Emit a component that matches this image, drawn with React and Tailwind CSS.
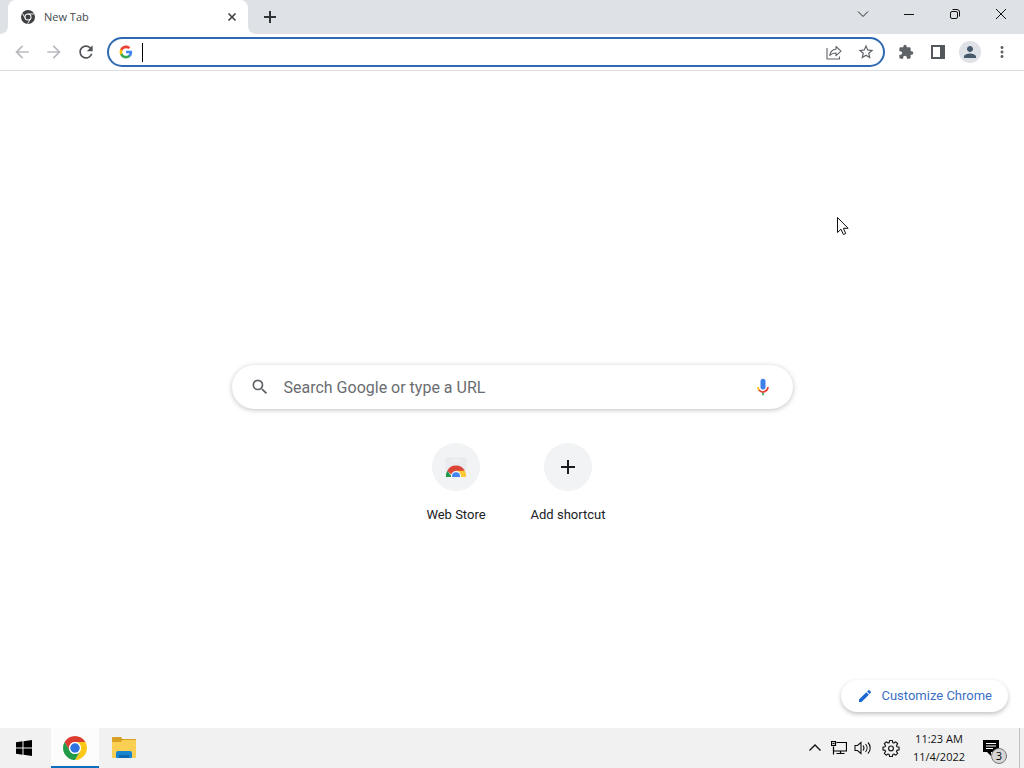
import React from "react";
import {
  MdArrowBack,
  MdArrowForward,
  MdRefresh,
  MdStarBorder,
  MdExtension,
  MdPerson,
  MdMoreVert,
  MdSearch,
  MdEdit,
} from "react-icons/md";

const RED = "M4.95 13A22 22 0 0 1 43.05 13L24 13A11 11 0 0 0 14.47 29.5Z";
const YELLOW = "M43.05 13A22 22 0 0 1 24 46L33.53 29.5A11 11 0 0 0 24 13Z";
const GREEN = "M24 46A22 22 0 0 1 4.95 13L14.47 29.5A11 11 0 0 0 33.53 29.5Z";

function ChromeLogo() {
  return (
    <svg viewBox="2 2 44 44" className="size-6" aria-hidden="true">
      <path d={RED} fill="#dc3b30" />
      <path d={YELLOW} fill="#fbc818" />
      <path d={GREEN} fill="#229a48" />
      <circle cx="24" cy="24" r="11" fill="#fff" />
      <circle cx="24" cy="24" r="8.7" fill="#2f74e0" />
    </svg>
  );
}

function ChromeMono() {
  return (
    <svg viewBox="2 2 44 44" className="size-[14px]" aria-hidden="true">
      <circle cx="24" cy="24" r="22" fill="#3c4043" />
      <circle cx="24" cy="24" r="9.5" fill="none" stroke="#fff" strokeWidth="3.2" />
      <path d="M24 14.5H43M15.8 28.8L6.500 12.600M32.200 28.800L22.800 45" stroke="#fff" strokeWidth="2.800" />
    </svg>
  );
}

function GoogleG() {
  return (
    <svg viewBox="0 0 24 24" className="size-[14px] shrink-0" aria-hidden="true">
      <path d="M22.560 12.250c0-.78-.07-1.530-.2-2.250H12v4.260h5.920c-.26 1.370-1.040 2.530-2.210 3.310v2.770h3.570c2.080-1.920 3.280-4.740 3.280-8.090z" fill="#4285f4" />
      <path d="M12 23c2.970 0 5.460-.98 7.280-2.660l-3.570-2.770c-.98.66-2.230 1.060-3.710 1.060-2.860 0-5.290-1.930-6.160-4.530H2.180v2.840C3.990 20.530 7.700 23 12 23z" fill="#34a853" />
      <path d="M5.840 14.090c-.22-.66-.35-1.360-.35-2.090s.13-1.430.35-2.090V7.070H2.180C1.430 8.550 1 10.220 1 12s.43 3.450 1.180 4.930z" fill="#fbbc05" />
      <path d="M12 5.380c1.620 0 3.060.56 4.210 1.640l3.150-3.150C17.450 2.090 14.970 1 12 1 7.700 1 3.990 3.470 2.180 7.070l3.660 2.840c.87-2.600 3.300-4.530 6.160-4.530z" fill="#ea4335" />
    </svg>
  );
}

function WebStoreIcon() {
  return (
    <svg viewBox="0 0 24 24" className="size-6" aria-hidden="true">
      <path d="M1.500 2.500h21V20a2 2 0 0 1-2 2h-17a2 2 0 0 1-2-2z" fill="#e9ebee" />
      <rect x="8" y="4.500" width="8" height="2" rx="1" fill="#f1f3f4" />
      <path d="M3.200 16A9.800 9.800 0 0 1 20.800 16H12L7.500 19.500z" fill="#dc4437" />
      <path d="M2 22a10 10 0 0 1 1.300-6.200L8 22z" fill="#21984b" />
      <path d="M12 15.800h8.700A10 10 0 0 1 22 22h-6z" fill="#fcc934" />
      <path d="M7 22v-1a5 5 0 0 1 10 0v1z" fill="#f4f7fb" />
      <path d="M8 22v-.800a4 4 0 0 1 8 0V22z" fill="#4285f4" />
    </svg>
  );
}

function MicIcon() {
  return (
    <svg viewBox="0 0 24 24" className="size-5" aria-hidden="true">
      <path d="M12 15a3 3 0 0 0 3-3V5a3 3 0 0 0-6 0v7a3 3 0 0 0 3 3z" fill="#3f7fe8" />
      <path d="M11 18h2v4h-2z" fill="#34a853" />
      <path d="M6 12a6 6 0 0 0 1.800 4.300" fill="none" stroke="#fbbc05" strokeWidth="2" />
      <path d="M7.200 15.700A6.100 6.100 0 0 0 18 12" fill="none" stroke="#ea4335" strokeWidth="2" />
    </svg>
  );
}

function FolderIcon() {
  return (
    <svg viewBox="0 0 24 24" className="size-6" aria-hidden="true">
      <path d="M0 2a1 1 0 0 1 1-1h8l1.500 2H23a1 1 0 0 1 1 1v5H0z" fill="#d9a024" />
      <path d="M0 6h9l1.500-2H23a1 1 0 0 1 1 1v16a1 1 0 0 1-1 1H1a1 1 0 0 1-1-1z" fill="#fad052" />
      <path d="M4 22v-5a2 2 0 0 1 2-2h12a2 2 0 0 1 2 2v5z" fill="#1b84cf" />
      <path d="M7 19h10v3H7z" fill="#0d68b0" />
    </svg>
  );
}

function GearIcon() {
  return (
    <svg viewBox="0 0 24 24" className="size-[18px]" fill="none" stroke="#1c1c1c" strokeWidth="1.600" strokeLinejoin="round" aria-hidden="true">
      <path d="M10.200 2h3.600l.6 2.800 1.500.6 2.500-1.600 2.500 2.500-1.600 2.500.6 1.500 2.800.6v3.600l-2.800.6-.6 1.500 1.600 2.500-2.500 2.500-2.500-1.600-1.500.6-.6 2.800h-3.600l-.6-2.800-1.500-.6-2.500 1.600-2.500-2.500 1.600-2.500-.6-1.500-2.800-.6v-3.600l2.800-.6.600-1.500L3.100 6.300l2.500-2.500 2.500 1.600 1.500-.6z" />
      <circle cx="12" cy="12.500" r="3.200" />
    </svg>
  );
}

function IconButton({ label, className = "", children }) {
  return (
    <button type="button" aria-label={label} className={`flex shrink-0 items-center justify-center ${className}`}>
      {children}
    </button>
  );
}

function TabStrip() {
  return (
    <header className="flex h-[34px] shrink-0 bg-white">
      <div className="w-2 shrink-0 rounded-br-lg bg-[#dee1e6]" />
      <div className="w-60 bg-[#dee1e6]">
        <div className="flex h-full items-center rounded-t-lg bg-white pr-2 pl-[13px]">
          <ChromeMono />
          <span className="ml-[9px] grow font-['Open_Sans',sans-serif] text-[11px] text-[#45494d]">New Tab</span>
          <IconButton label="Close tab" className="size-4">
            <svg viewBox="0 0 16 16" className="size-4" stroke="#3c4043" strokeWidth="1.600">
              <path d="M4.500 4.500l7 7M11.500 4.500l-7 7" />
            </svg>
          </IconButton>
        </div>
      </div>
      <div className="flex grow rounded-bl-lg bg-[#dee1e6]">
        <IconButton label="New tab" className="ml-2 w-7">
          <svg viewBox="0 0 16 16" className="size-4" stroke="#303336" strokeWidth="2">
            <path d="M8 2v12M2 8h12" />
          </svg>
        </IconButton>
        <div className="ml-auto flex h-7">
          <IconButton label="Search tabs" className="w-[46px]">
            <svg viewBox="0 0 12 12" className="size-3" fill="none" stroke="#222">
              <path d="M1 3.500l5 5 5-5" />
            </svg>
          </IconButton>
          <IconButton label="Minimize" className="w-[46px]">
            <svg viewBox="0 0 12 12" className="size-3" stroke="#111">
              <path d="M1 6.500h10" />
            </svg>
          </IconButton>
          <IconButton label="Restore" className="w-[46px]">
            <svg viewBox="0 0 12 12" className="size-3" fill="none" stroke="#111">
              <rect x="1.500" y="3.500" width="7" height="7" rx="1.500" />
              <path d="M3.500 1.500H8A2.500 2.500 0 0 1 10.500 4v4.500" />
            </svg>
          </IconButton>
          <IconButton label="Close" className="w-[46px]">
            <svg viewBox="0 0 12 12" className="size-3" stroke="#111">
              <path d="M1 1l10 10M11 1L1 11" />
            </svg>
          </IconButton>
        </div>
      </div>
    </header>
  );
}

function Toolbar() {
  return (
    <nav className="flex h-[37px] shrink-0 items-center border-b border-[#dcdddd] bg-white px-1.5 text-[#5f6368]">
      <IconButton label="Back" className="h-8 w-8 text-[#b9bbbe]"><MdArrowBack size={20} /></IconButton>
      <IconButton label="Forward" className="h-8 w-8 text-[#b9bbbe]"><MdArrowForward size={20} /></IconButton>
      <IconButton label="Reload" className="h-8 w-8 text-[#4f5357]"><MdRefresh size={20} /></IconButton>
      <div className="ml-[5px] flex h-[30px] grow items-center rounded-full border-2 border-[#2e69b3] bg-white pr-px pl-2.5">
        <GoogleG />
        <span className="ml-[9px] h-[19px] w-px bg-black" />
        <input aria-label="Address and search bar" className="h-5 min-w-0 grow bg-transparent px-1 font-['Roboto',sans-serif] text-sm outline-none" />
        <IconButton label="Share this page" className="h-6 w-8">
          <svg viewBox="0 0 18 18" className="size-[18px]" fill="none" stroke="#5f6368" strokeWidth="1.100" strokeLinejoin="round">
            <path d="M2 5v11h12.500v-2.500" />
            <path d="M4.800 12.500c.4-4 2.700-6 6.200-6.300V3.500l5 4.700-5 4.500V10c-2.800 0-4.600.6-6.200 2.500z" />
          </svg>
        </IconButton>
        <IconButton label="Bookmark this tab" className="h-6 w-8"><MdStarBorder size={18} /></IconButton>
      </div>
      <IconButton label="Extensions" className="ml-[5px] h-8 w-8"><MdExtension size={16} /></IconButton>
      <IconButton label="Side panel" className="h-8 w-8">
        <svg viewBox="0 0 16 16" className="size-4">
          <path d="M1 1h14v14H1zM3 3v10h7V3z" fill="#54585c" fillRule="evenodd" />
        </svg>
      </IconButton>
      <IconButton label="Profile" className="h-8 w-8">
        <span className="flex size-[22px] items-center justify-center rounded-full bg-[#dee1e6] text-[#46586c]"><MdPerson size={18} /></span>
      </IconButton>
      <IconButton label="Menu" className="h-8 w-8"><MdMoreVert size={18} /></IconButton>
    </nav>
  );
}

function Shortcut({ label, children }) {
  return (
    <a href="#" className="flex w-28 flex-col items-center">
      <span className="flex size-12 items-center justify-center rounded-full bg-[#f1f3f4]">{children}</span>
      <span className="mt-[14px] text-[13px] leading-5 text-[#202124]">{label}</span>
    </a>
  );
}

function NewTabPage() {
  return (
    <main className="flex grow flex-col items-center bg-white px-4 pt-[294px] font-['Roboto',sans-serif]">
      <form className="flex h-11 w-full max-w-[561px] shrink-0 items-center rounded-full bg-white pr-5 pl-[18px] shadow-[0_1px_5px_rgba(32,33,36,0.28)]">
        <MdSearch size={20} className="shrink-0 text-[#5f6368]" />
        <input
          type="text"
          aria-label="Search Google or type a URL"
          placeholder="Search Google or type a URL"
          className="ml-[14px] h-full min-w-0 grow bg-transparent text-base text-[#202124] outline-none placeholder:text-[#6a6d71]"
        />
        <IconButton label="Search by voice"><MicIcon /></IconButton>
      </form>
      <div className="mt-[34px] flex shrink-0">
        <Shortcut label="Web Store"><WebStoreIcon /></Shortcut>
        <Shortcut label="Add shortcut">
          <svg viewBox="0 0 16 16" className="size-4" stroke="#1b1c1e" strokeWidth="2">
            <path d="M8 1v14M1 8h14" />
          </svg>
        </Shortcut>
      </div>
      <button type="button" className="mt-auto mb-4 flex h-8 shrink-0 items-center gap-2 self-end rounded-full bg-white px-4 text-[13px] text-[#3c6fc4] shadow-[0_2px_4px_rgba(32,33,36,0.28)]">
        <MdEdit size={16} className="text-[#1a68cf]" />
        Customize Chrome
      </button>
    </main>
  );
}

function Taskbar() {
  return (
    <footer className="flex h-10 shrink-0 items-stretch bg-[#f1f1f1] font-['Open_Sans',sans-serif]">
      <IconButton label="Start" className="mr-[3px] w-12">
        <svg viewBox="0 0 16 16" className="size-4">
          <path d="M0 2.200L6.500 1.300V7.500H0zM7.500 1.150L16 0V7.500H7.500zM0 8.500h6.500v6.200L0 13.800zM7.500 8.500H16V16l-8.500-1.150z" fill="#000" />
        </svg>
      </IconButton>
      <IconButton label="Google Chrome" className="w-12 border-b-2 border-[#106ebe] bg-[#fcfcfc] pt-0.5"><ChromeLogo /></IconButton>
      <IconButton label="File Explorer" className="ml-px w-12"><FolderIcon /></IconButton>
      <div className="ml-auto flex items-stretch">
        <IconButton label="Show hidden icons" className="w-6">
          <svg viewBox="0 0 16 16" className="size-4" fill="none" stroke="#111" strokeWidth="1.400">
            <path d="M2.500 10.500L8 5l5.500 5.500" />
          </svg>
        </IconButton>
        <IconButton label="Network" className="w-6">
          <svg viewBox="0 0 16 16" className="size-4" fill="none" stroke="#000" strokeWidth="1.200">
            <path d="M5.500 2.500h10v8.500H2.500V6.500M.5 1.500h4v4h-4zM2.500 11v3.500M9.500 11v2.500M5.500 13.500h8" />
            <path d="M1.500 3.500h2" />
          </svg>
        </IconButton>
        <IconButton label="Volume" className="w-6">
          <svg viewBox="0 0 18 16" className="h-4 w-[18px]" fill="none" stroke="#111" strokeWidth="1.100">
            <path d="M1 5.500h2.500L7 2.500v11l-3.500-3H1zM9 5.500a4 4 0 0 1 0 5M11.500 4a6 6 0 0 1 0 8M14 2.500a8 8 0 0 1 0 11" />
          </svg>
        </IconButton>
        <IconButton label="Settings" className="w-8"><GearIcon /></IconButton>
        <button type="button" className="w-16 text-center text-[11px] leading-[18px] text-[#111]">
          <span className="block">11:23 AM</span>
          <span className="block">11/4/2022</span>
        </button>
        <IconButton label="3 notifications" className="w-[49px] border-r border-[#bfbfbf]">
          <span className="relative mr-2 size-4">
            <svg viewBox="0 0 16 16" className="size-4">
              <path d="M0 0h16v12H8v4l-4-4H0z" fill="#000" />
              <path d="M3 3.500h10M3 6h10M3 8.500h7" stroke="#fff" />
            </svg>
            <span className="absolute top-2 left-2 flex size-4 items-center justify-center rounded-full border border-[#777] bg-[#d6d6d6] text-[11px] text-black">3</span>
          </span>
        </IconButton>
        <div className="w-1" />
      </div>
    </footer>
  );
}

export default function App() {
  return (
    <div className="flex min-h-screen flex-col bg-white">
      <TabStrip />
      <Toolbar />
      <NewTabPage />
      <Taskbar />
      <svg viewBox="0 0 13 20" className="pointer-events-none absolute top-[216px] left-[836px] h-5 w-[13px]" aria-hidden="true">
        <path d="M1.500 1.500v15l3.500-3.300 2.400 5.300 2.300-1-2.300-5.200h4.700z" fill="#fff" stroke="#111" />
      </svg>
    </div>
  );
}
